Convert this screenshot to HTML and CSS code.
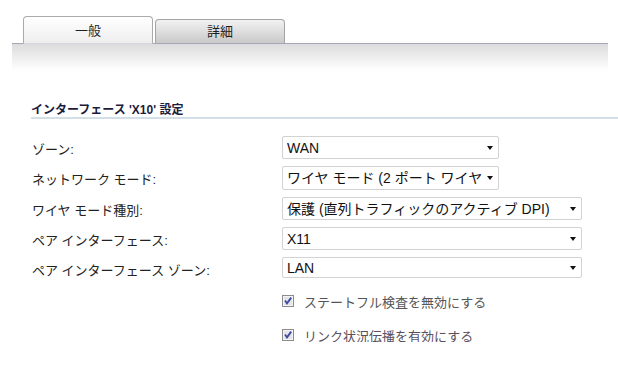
FILE: index.html
```html
<!DOCTYPE html>
<html lang="ja">
<head>
<meta charset="utf-8">
<link rel="stylesheet" href="styles.css">
</head>
<body>
<div class="tabs">
  <div class="tab tab-active">一般</div>
  <div class="tab tab-inactive">詳細</div>
</div>
<div class="bar"></div>

<h2 class="section-title">インターフェース 'X10' 設定</h2>

<div class="form">
  <div class="label">ゾーン:</div>
  <div class="select w-short h23"><span class="sel-text">WAN</span><span class="arrow"></span></div>

  <div class="label">ネットワーク モード:</div>
  <div class="select w-short h24" title="ワイヤ モード (2 ポート ワイヤ)"><span class="sel-text">ワイヤ モード (2 ポート ワイヤ</span><span class="arrow"></span></div>

  <div class="label">ワイヤ モード種別:</div>
  <div class="select w-long h23"><span class="sel-text">保護 (直列トラフィックのアクティブ DPI)</span><span class="arrow"></span></div>

  <div class="label">ペア インターフェース:</div>
  <div class="select w-long h23"><span class="sel-text">X11</span><span class="arrow"></span></div>

  <div class="label">ペア インターフェース ゾーン:</div>
  <div class="select w-long h21"><span class="sel-text">LAN</span><span class="arrow"></span></div>

  <div class="checks">
    <div class="check-row">
      <svg class="cb" width="12" height="12" viewBox="0 0 12 12"><rect x="0.5" y="0.5" width="11" height="11" fill="#e4e4e8" stroke="#8c8c8c"/><rect x="1.5" y="1.5" width="9" height="9" fill="none" stroke="#f4f4f6"/><path d="M3 5.6 L5 8.4 L9.2 2.6" fill="none" stroke="#3d4a9e" stroke-width="1.8"/></svg>
      <span class="check-text">ステートフル検査を無効にする</span>
    </div>
    <div class="check-row">
      <svg class="cb" width="12" height="12" viewBox="0 0 12 12"><rect x="0.5" y="0.5" width="11" height="11" fill="#e4e4e8" stroke="#8c8c8c"/><rect x="1.5" y="1.5" width="9" height="9" fill="none" stroke="#f4f4f6"/><path d="M3 5.6 L5 8.4 L9.2 2.6" fill="none" stroke="#3d4a9e" stroke-width="1.8"/></svg>
      <span class="check-text check-text-2">リンク状況伝播を有効にする</span>
    </div>
  </div>
</div>
</body>
</html>
```

FILE: styles.css
```css
html, body {
  margin: 0;
  padding: 0;
  background: #ffffff;
}

body {
  font-family: "Liberation Sans", "Noto Sans CJK JP", sans-serif;
  font-size: 13px;
  color: #333333;
  width: 618px;
}

.tabs {
  display: flex;
  align-items: flex-end;
  gap: 2px;
  padding: 16px 0 0 23px;
}

.tab {
  box-sizing: border-box;
  border: 1px solid #aaaaaa;
  border-bottom: none;
  border-radius: 4px 4px 0 0;
  text-align: center;
  font-size: 13px;
  color: #1e1e1e;
}

.tab-active {
  width: 130px;
  height: 28px;
  line-height: 27px;
  margin-bottom: -1px;
  position: relative;
  z-index: 1;
  background: linear-gradient(#ffffff, #eeeeee);
  border-bottom: 1px solid #d6d6e2;
}

.tab-inactive {
  width: 130px;
  height: 24px;
  line-height: 23px;
  background: linear-gradient(#f2f2f2, #c9c9c9);
  border-color: #a4a4a4;
}

.bar {
  margin: 0 10px 0 12px;
  height: 26px;
  border-top: 1px solid #aaa3bb;
  background: linear-gradient(#dcdcdc, #ffffff);
}

.section-title {
  margin: 33px 0 0 31px;
  font-size: 12px;
  line-height: 14px;
  font-weight: bold;
  color: #1c1c3c;
  border-bottom: 2px solid #d3dfe7;
}

.form {
  display: grid;
  grid-template-columns: 250px auto;
  row-gap: 7px;
  margin: 17px 0 0 32px;
}

.label {
  padding-top: 6px;
  line-height: 16px;
  color: #222222;
  white-space: nowrap;
}

.select {
  box-sizing: border-box;
  display: flex;
  align-items: center;
  border: 1px solid #d2d2d2;
  border-radius: 2px;
  background: #ffffff;
  padding: 0 5px 0 4px;
  color: #111111;
  font-size: 14px;
  overflow: hidden;
}

.w-short { width: 217px; }
.w-long { width: 300px; }
.h23 { height: 23px; }
.h24 { height: 24px; }
.h21 { height: 21px; }

.sel-text {
  flex: 1;
  min-width: 0;
  overflow: hidden;
  white-space: nowrap;
  line-height: 18px;
}

.arrow {
  flex: none;
  width: 0;
  height: 0;
  border-left: 3px solid transparent;
  border-right: 3px solid transparent;
  border-top: 4px solid #111111;
  margin-left: 3px;
}

.checks {
  grid-column: 2;
  display: flex;
  flex-direction: column;
  gap: 20px;
  margin-top: 8px;
}

.check-row {
  display: flex;
  align-items: center;
  gap: 10px;
  height: 14px;
}

.cb {
  display: block;
  flex: none;
}

.check-text {
  color: #555555;
  white-space: nowrap;
}

.check-text-2 {
  color: #5a4f5c;
}
```
